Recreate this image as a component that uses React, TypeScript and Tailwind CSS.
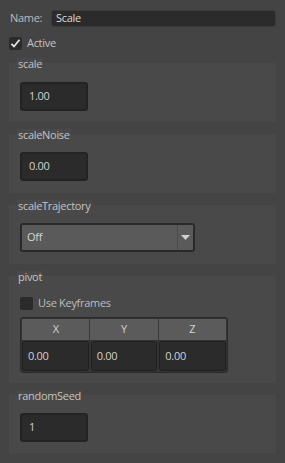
import { ReactNode } from "react";

const font = { fontFamily: '"Open Sans", "Noto Sans", sans-serif' };

const NumberField = ({ value }: { value: string }) => (
  <div className="w-[68px] h-[29px] rounded-[3px] border-2 border-[#232323] bg-[#2b2b2b] flex items-center pl-[7px] text-[11px] tracking-[-0.3px] text-[#d2d2d2]">
    {value}
  </div>
);

const Group = ({ title, children, className }: { title: string; children: ReactNode; className: string }) => (
  <div className="flex flex-col">
    <div className="relative z-10 self-start ml-[8px] px-px h-[12px] leading-[12px] bg-[#494949] text-[11px] tracking-[-0.3px] text-[#c4c4c4]">
      {title}
    </div>
    <div className={`-mt-[7px] bg-[#494949] px-[11px] ${className}`}>{children}</div>
  </div>
);

const Check = ({ checked }: { checked?: boolean }) => (
  <div className="w-[13px] h-[13px] rounded-[2px] bg-[#2b2b2b] flex items-center justify-center">
    {checked && (
      <svg width="11" height="11" viewBox="0 0 11 11">
        <path d="M1.5 5.8 L4 8.5 L9.5 1.8" fill="none" stroke="#e6e6e6" strokeWidth="1.8" />
      </svg>
    )}
  </div>
);

export default function App() {
  return (
    <div className="w-[285px] h-[463px] bg-[#444444] px-[9px] pt-[10px] overflow-hidden text-[11px] tracking-[-0.3px]" style={font}>
      {/* Name */}
      <div className="flex items-center h-[17px]">
        <span className="w-[41px] pl-px text-[#bdbdbd]">Name:</span>
        <div className="ml-auto w-[225px] h-[17px] rounded-[3px] bg-[#2b2b2b] border border-[#3a3a3a] flex items-center pl-[4px] text-[#dcdcdc]">
          Scale
        </div>
      </div>

      {/* Active */}
      <div className="flex items-center gap-[5px] mt-[10px] h-[13px]">
        <Check checked />
        <span className="text-[#c4c4c4]">Active</span>
      </div>

      <div className="flex flex-col gap-[7px] mt-[8px]">
        <Group title="scale" className="h-[59px] pt-[19px]">
          <NumberField value="1.00" />
        </Group>

        <Group title="scaleNoise" className="h-[59px] pt-[18px]">
          <NumberField value="0.00" />
        </Group>

        <Group title="scaleTrajectory" className="h-[59px] pt-[18px]">
          <div className="w-[175px] h-[29px] rounded-[3px] border-2 border-[#2a2a2a] bg-[#5a5a5a] flex items-stretch text-[#d6d6d6]">
            <div className="flex-1 flex items-center pl-[5px]">Off</div>
            <div className="w-[16px] border-l border-[#4a4a4a] flex items-center justify-center">
              <svg width="9" height="5" viewBox="0 0 9 5">
                <path d="M0 0 H9 L4.5 5 Z" fill="#cfcfcf" />
              </svg>
            </div>
          </div>
        </Group>

        <Group title="pivot" className="h-[107px] pt-[21px]">
          <div className="flex items-center gap-[5px] h-[13px]">
            <Check />
            <span className="text-[#bdbdbd]">Use Keyframes</span>
          </div>
          <div className="mt-[7px] w-[208px] rounded-[3px] border border-[#2a2a2a] bg-[#333333] p-px">
            <div className="grid grid-cols-3 gap-px bg-[#3a3a3a]">
              {["X", "Y", "Z"].map((h) => (
                <div key={h} className="h-[21px] bg-[#5b5b5b] flex items-center justify-center text-[#d2d2d2]">
                  {h}
                </div>
              ))}
            </div>
            <div className="grid grid-cols-3 gap-[2px] mt-px">
              {["0.00", "0.00", "0.00"].map((v, i) => (
                <div key={i} className="h-[30px] rounded-[3px] border border-[#1f1f1f] bg-[#2b2b2b] flex items-center pl-[5px] text-[#d2d2d2]">
                  {v}
                </div>
              ))}
            </div>
          </div>
        </Group>

        <Group title="randomSeed" className="h-[58px] pt-[18px]">
          <NumberField value="1" />
        </Group>
      </div>
    </div>
  );
}
